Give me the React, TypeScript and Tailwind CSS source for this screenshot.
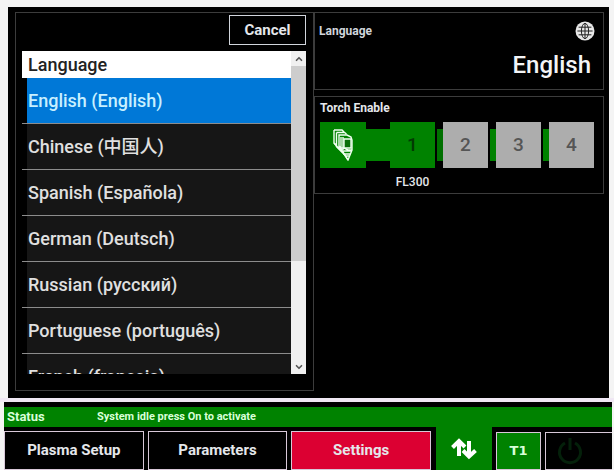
import { useState } from 'react';
import { ChevronDown, ChevronUp } from 'lucide-react';

const LANGUAGES = [
  'English (English)',
  'Chinese (中国人)',
  'Spanish (Española)',
  'German (Deutsch)',
  'Russian (русский)',
  'Portuguese (português)',
  'French (français)',
];

const TABS = ['Plasma Setup', 'Parameters', 'Settings'];

function GlobeIcon() {
  return (
    <svg viewBox="0 0 20 20" className="w-5 h-5" fill="none" stroke="#222" strokeWidth="1">
      <circle cx="10" cy="10" r="9.5" fill="#e8e8e8" stroke="none" />
      <ellipse cx="10" cy="10" rx="3.6" ry="7.6" />
      <path d="M10 2.4v15.2M2.4 10h15.2M3.6 6.2h12.8M3.6 13.8h12.8" />
    </svg>
  );
}

function TorchIcon() {
  return (
    <svg viewBox="0 0 20 32" className="w-5 h-8" fill="none" stroke="#f0fff0" strokeWidth="1.4">
      <path d="M1 1h8l2 2M1 1v13l3 3M3.500 3.500h8l2 1.500M3.500 3.500v14l3 3M6 6h8l4 2 1 3v10l-4 10-4-6-5-5z" />
      <path d="M1 14l5 6M3 17l9 9M6 17l4 6 5 8M6 19h5l4 2h4M8 8v11M10 8v13M8 22h10M10 25h7M12 27h4" />
      <path d="M11 10h7v9h-7z" fill="#087008" />
    </svg>
  );
}

function TransferIcon() {
  return (
    <svg viewBox="0 0 26 22" className="w-[26px] h-[22px]" fill="none" stroke="#fff" strokeWidth="4">
      <path d="M8 18V4M1.5 9.5L8 3l6 6" />
      <path d="M18 3v16M12 12.5l6 6 6.5-6" />
    </svg>
  );
}

function PowerIcon() {
  return (
    <svg viewBox="0 0 26 28" className="w-[26px] h-7" fill="none" stroke="#04200a" strokeWidth="3">
      <path d="M8 6a10.5 10.5 0 1 0 10 0M13 1v12" />
    </svg>
  );
}

function LanguageDialog({ selected, onSelect }: { selected: string; onSelect: (l: string) => void }) {
  return (
    <section className="border border-[#3c3c3c] pl-1.5 pr-[7px] pt-[2px] pb-4">
      <div className="flex justify-end">
        <button className="w-[77px] h-[30px] border border-gray-300 text-[15px] font-bold text-gray-200">
          Cancel
        </button>
      </div>
      <div className="mt-1.5 flex h-[323px]">
        <div className="flex-1 overflow-hidden">
          <h2 className="h-[27px] bg-white pl-1.5 text-[18px] leading-[27px] font-medium text-[#222]">Language</h2>
          <ul>
            {LANGUAGES.map((language) => (
              <li key={language} className="h-[46px] border-b border-[#8c8c8c] pl-[5px]">
                <button
                  onClick={() => onSelect(language)}
                  className={`block w-full h-full pl-px text-left text-[18px] font-medium ${
                    language === selected ? 'bg-[#0078d7] text-[#c8f0ff]' : 'bg-[#161616] text-[#e0e0e0]'
                  }`}
                >
                  {language}
                </button>
              </li>
            ))}
          </ul>
        </div>
        <div className="flex w-[15px] flex-col bg-[#f0f0f0] text-[#555]">
          <button aria-label="Scroll up" className="flex h-[15px] items-center justify-center">
            <ChevronUp className="w-2.5 h-2.5" strokeWidth={4} />
          </button>
          <div className="h-[195px] bg-[#cdcdcd]" />
          <button aria-label="Scroll down" className="mt-auto flex h-[15px] items-center justify-center">
            <ChevronDown className="w-2.5 h-2.5" strokeWidth={4} />
          </button>
        </div>
      </div>
    </section>
  );
}

function TorchPanel() {
  const [torch, setTorch] = useState(1);

  return (
    <section className="h-[98px] border border-[#3c3c3c] px-[5px]">
      <h2 className="h-[25px] pt-[3px] text-[12px] leading-4 font-bold text-gray-200">Torch Enable</h2>
      <div className="flex items-start">
        <div className="flex w-[46px] h-[46px] shrink-0 items-center justify-center bg-[#008200]">
          <TorchIcon />
        </div>
        <div className="mt-[7px] w-6 h-8 bg-[#008200]" />
        {[1, 2, 3, 4].map((n) => (
          <div key={n} className="flex items-start">
            {n > 1 && <div className={`mt-[7px] w-2 h-8 border-l-2 border-black ${n === 2 ? 'bg-[#007000]' : 'bg-[#008200]'}`} />}
            <div className="w-[45px]">
              <button
                onClick={() => setTorch(n)}
                className={`block w-full h-[46px] text-[19px] font-medium ${
                  n === torch ? 'bg-[#008200] text-[#033b03]' : 'bg-[#adadad] text-[#555]'
                }`}
              >
                {n}
              </button>
              {n === 1 && <p className="pt-1.5 text-center text-[12px] leading-4 font-medium text-gray-200">FL300</p>}
            </div>
          </div>
        ))}
      </div>
    </section>
  );
}

function StatusBar() {
  const [tab, setTab] = useState('Settings');

  return (
    <footer className="ml-1 mr-0.5 bg-black pt-[5px] border-b-2 border-[#ddd]">
      <div className="flex h-5 items-center bg-[#008200] pl-[3px] text-[#d8ffd8]">
        <span className="w-[90px] text-[13px] font-bold">Status</span>
        <span className="text-[11px] font-bold">System idle press On to activate</span>
      </div>
      <nav className="flex h-[43px]">
        <div className="flex flex-1 gap-1 pt-1">
          {TABS.map((name) => (
            <button
              key={name}
              onClick={() => setTab(name)}
              className={`flex-1 border border-[#d8c8d8] text-[15px] font-bold text-gray-200 ${
                name === tab ? 'bg-[#dc0032]' : 'bg-black'
              }`}
            >
              {name}
            </button>
          ))}
        </div>
        <button aria-label="Transfer" className="ml-[5px] flex w-14 items-center justify-center bg-[#008200]">
          <TransferIcon />
        </button>
        <div className="flex gap-1 pl-1 pt-[5px]">
          <button className="w-[45px] border border-[#d8c8d8] bg-[#008200] font-['DejaVu_Sans'] text-[13px] font-bold text-[#d8ffd8]">
            T1
          </button>
          <button aria-label="Power" className="flex w-[67px] items-center border border-r-0 border-[#d8c8d8] pl-[11px]">
            <PowerIcon />
          </button>
        </div>
      </nav>
    </footer>
  );
}

export default function App() {
  const [language, setLanguage] = useState(LANGUAGES[0]);

  return (
    <div className="bg-[#f4f4f4] pt-[7px] font-['Roboto','Noto_Sans_CJK_SC',sans-serif]">
      <main className="ml-2 mr-[5px] grid grid-cols-[299fr_290fr] bg-black pl-[7px] pr-[5px] pt-[5px] pb-[7px]">
        <LanguageDialog selected={language} onSelect={setLanguage} />
        <div className="flex flex-col gap-[6px]">
          <section className="h-[78px] border border-[#3c3c3c] pl-1 pr-2">
            <div className="flex h-[35px] items-center justify-between">
              <h2 className="text-[12px] font-bold text-gray-300">Language</h2>
              <GlobeIcon />
            </div>
            <p className="pr-1 text-right text-[24px] leading-[34px] font-medium text-gray-100">
              {language.split(' ')[0]}
            </p>
          </section>
          <TorchPanel />
        </div>
      </main>
      <div className="h-1 bg-[#f0e8f4]" />
      <StatusBar />
    </div>
  );
}
